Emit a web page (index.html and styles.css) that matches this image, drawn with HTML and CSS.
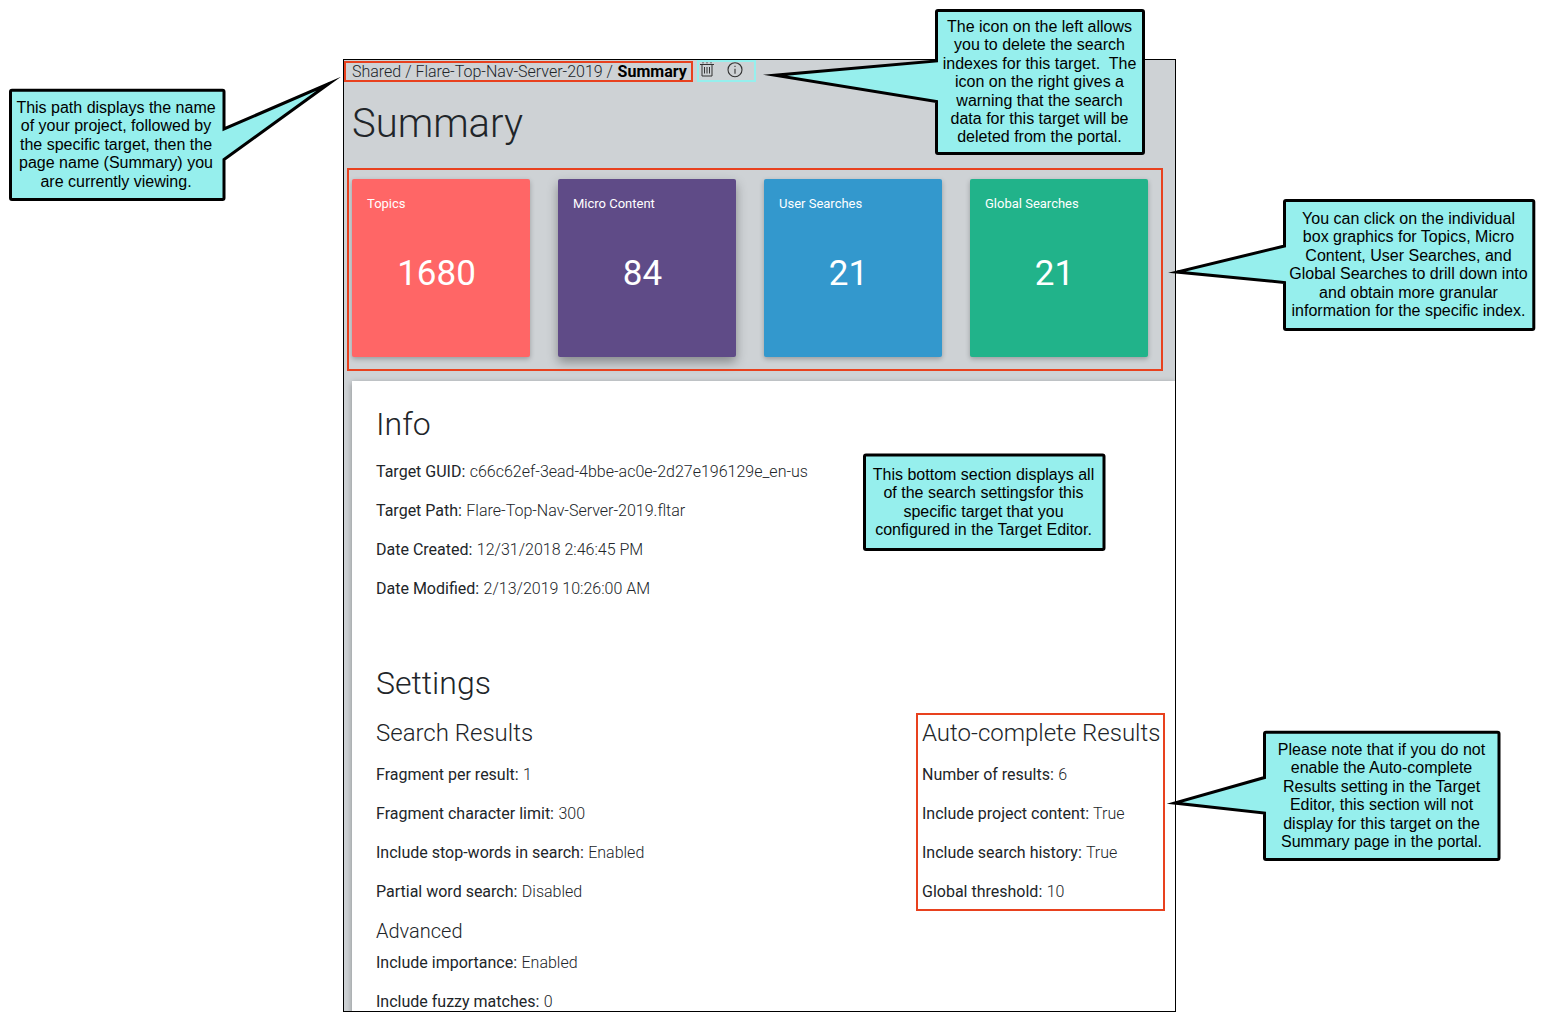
FILE: index.html
```html
<!DOCTYPE html>
<html lang="en">
<head>
<meta charset="utf-8">
<title>Summary</title>
<link rel="stylesheet" href="styles.css">
</head>
<body>
<div class="canvas">
  <main class="portal">
    <header class="crumbs">
      <nav class="path">Shared / Flare-Top-Nav-Server-2019 / <b>Summary</b></nav>
      <svg class="icon trash" viewBox="0 0 16 16" width="16" height="16"><path d="M2 2.5h14M4 2.5v11.5h10V2.5M6.5 5v6.5M9 5v6.5M11.5 5v6.5M5 .2v1.2M9 .2v1.2M13 .2v1.2"/></svg>
      <svg class="icon info" viewBox="0 0 16 16" width="16" height="16"><circle cx="8" cy="7.7" r="7"/><path d="M8 6.7v5M8 3.7v1.4"/></svg>
    </header>
    <h1>Summary</h1>
    <section class="cards">
      <a class="card topics"><span class="label">Topics</span><span class="count">1680</span></a>
      <a class="card micro"><span class="label">Micro Content</span><span class="count">84</span></a>
      <a class="card user"><span class="label">User Searches</span><span class="count">21</span></a>
      <a class="card global"><span class="label">Global Searches</span><span class="count">21</span></a>
    </section>
    <section class="panel">
      <h2>Info</h2>
      <p><b>Target GUID:</b> c66c62ef-3ead-4bbe-ac0e-2d27e196129e_en-us</p>
      <p><b>Target Path:</b> Flare-Top-Nav-Server-2019.fltar</p>
      <p><b>Date Created:</b> 12/31/2018 2:46:45 PM</p>
      <p><b>Date Modified:</b> 2/13/2019 10:26:00 AM</p>
      <h2 class="settings">Settings</h2>
      <div class="columns">
        <div>
          <h3>Search Results</h3>
          <p><b>Fragment per result:</b> 1</p>
          <p><b>Fragment character limit:</b> 300</p>
          <p><b>Include stop-words in search:</b> Enabled</p>
          <p><b>Partial word search:</b> Disabled</p>
          <h4>Advanced</h4>
          <p><b>Include importance:</b> Enabled</p>
          <p><b>Include fuzzy matches:</b> 0</p>
        </div>
        <div>
          <h3>Auto-complete Results</h3>
          <p><b>Number of results:</b> 6</p>
          <p><b>Include project content:</b> True</p>
          <p><b>Include search history:</b> True</p>
          <p><b>Global threshold:</b> 10</p>
        </div>
      </div>
    </section>
  </main>

  <div class="mark mark-path"></div>
  <div class="mark mark-icons"></div>
  <div class="mark mark-cards"></div>
  <div class="mark mark-auto"></div>

  <svg class="bubbles" viewBox="0 0 1544 1012" width="1544" height="1012">
    <path d="M12 90.3H222.5Q224 90.3 224 91.8V129L329 83.5L224 159.5V198Q224 199.5 222.5 199.5H12Q10.5 199.5 10.5 198V91.8Q10.5 90.3 12 90.3Z"/>
    <path d="M938 10.5H1142Q1143.5 10.5 1143.5 12V152Q1143.5 153.5 1142 153.5H938Q936.5 153.5 936.5 152V101.5L775 75.3L936.5 61V12Q936.5 10.5 938 10.5Z"/>
    <path d="M1286 200.5H1532.3Q1533.8 200.5 1533.8 202V328Q1533.8 329.5 1532.3 329.5H1286Q1284.5 329.5 1284.5 328V282.5L1177 272L1284.5 246V202Q1284.5 200.5 1286 200.5Z"/>
    <path d="M866 455H1102.5Q1104 455 1104 456.5V548Q1104 549.5 1102.5 549.5H866Q864.5 549.5 864.5 548V456.5Q864.5 455 866 455Z"/>
    <path d="M1266 732.3H1497.5Q1499 732.3 1499 733.8V858Q1499 859.5 1497.5 859.5H1266Q1264.5 859.5 1264.5 858V813L1174.5 803L1264.5 777.5V733.8Q1264.5 732.3 1266 732.3Z"/>
  </svg>
  <p class="note note-path">This path displays the name<br>of your project, followed by<br>the specific target, then the<br>page name (Summary) you<br>are currently viewing.</p>
  <p class="note note-icons">The icon on the left allows<br>you to delete the search<br>indexes for this target.&nbsp; The<br>icon on the right gives a<br>warning that the search<br>data for this target will be<br>deleted from the portal.</p>
  <p class="note note-cards">You can click on the individual<br>box graphics for Topics, Micro<br>Content, User Searches, and<br>Global Searches to drill down into<br>and obtain more granular<br>information for the specific index.</p>
  <p class="note note-settings">This bottom section displays all<br>of the search settingsfor this<br>specific target that you<br>configured in the Target Editor.</p>
  <p class="note note-auto">Please note that if you do not<br>enable the Auto-complete<br>Results setting in the Target<br>Editor, this section will not<br>display for this target on the<br>Summary page in the portal.</p>
</div>
</body>
</html>
```
FILE: styles.css
```css
* { box-sizing: border-box; }
body { margin: 0; background: #fff; }
.canvas {
  position: relative;
  width: 1544px;
  height: 1012px;
  padding: 59px 0 0 343px;
  overflow: hidden;
}
.portal {
  width: 833px;
  height: 953px;
  padding-left: 8px;
  border: 1px solid #000;
  background: #ced2d5;
  overflow: hidden;
  font: 300 16px/24px Roboto, sans-serif;
  color: #212529;
}
.crumbs { display: flex; height: 24px; }
.path { width: 346px; white-space: nowrap; }
.path b { margin-left: .8px; font-weight: 700; color: #000; }
.icon { margin-top: 2px; fill: none; stroke: #333; stroke-width: 1; }
.info { margin: 2px 0 0 13px; stroke-width: 1.1; }
h1, h2, h3, h4, p { margin: 0; font-weight: 300; }
h1 { margin: 16px 0 31px; font-size: 40px; line-height: 48px; }
.cards { display: flex; gap: 28px; margin-bottom: 24px; }
.card {
  display: flex;
  flex-direction: column;
  gap: 32px;
  width: 178px;
  height: 178px;
  padding: 15px;
  border-radius: 2px;
  color: #fff;
  font-weight: 400;
  box-shadow: 0 2px 5px rgba(0, 0, 0, .26);
}
.label { font-size: 13px; line-height: 20px; }
.count { padding-right: 9px; font-size: 35px; line-height: 55px; text-align: center; }
.topics { background: #ff6666; }
.micro { background: #5f4b87; box-shadow: 0 5px 11px rgba(0, 0, 0, .35); }
.user { background: #3398cd; }
.global { background: #21b38a; }
.panel {
  height: 700px;
  padding: 24px;
  background: #fff;
  box-shadow: 0 2px 6px rgba(0, 0, 0, .35);
}
h2 { margin-bottom: 16px; font-size: 32px; line-height: 39px; }
.settings { margin: 63px 0 16px; }
h3 { margin-bottom: 15px; font-size: 24px; line-height: 29px; white-space: nowrap; }
h4 { margin-bottom: 8px; font-size: 20px; line-height: 24px; }
.panel p { margin-bottom: 15px; }
.panel b { margin-right: .5px; font-weight: 400; }
.columns { display: grid; grid-template-columns: 546px 240px; }

.mark { position: absolute; border: 2px solid #e8411e; }
.mark-path { left: 344px; top: 61px; width: 349px; height: 21px; }
.mark-icons { left: 697px; top: 60px; width: 59px; height: 22px; border-color: #96efed; }
.mark-cards { left: 347px; top: 168px; width: 816px; height: 203px; }
.mark-auto { left: 916px; top: 713px; width: 249px; height: 198px; }

.bubbles { position: absolute; left: 0; top: 0; fill: #96efed; stroke: #000; stroke-width: 3; stroke-miterlimit: 30; }
.note {
  position: absolute;
  font: 16px/18.4px "Liberation Sans", Arial, sans-serif;
  color: #000;
  text-align: center;
  white-space: nowrap;
}
.note-path { left: 10px; top: 99px; width: 212px; }
.note-icons { left: 936px; top: 18px; width: 207px; }
.note-cards { left: 1284px; top: 210px; width: 249px; }
.note-settings { left: 864px; top: 466px; width: 239px; }
.note-auto { left: 1264px; top: 741px; width: 235px; }
```
